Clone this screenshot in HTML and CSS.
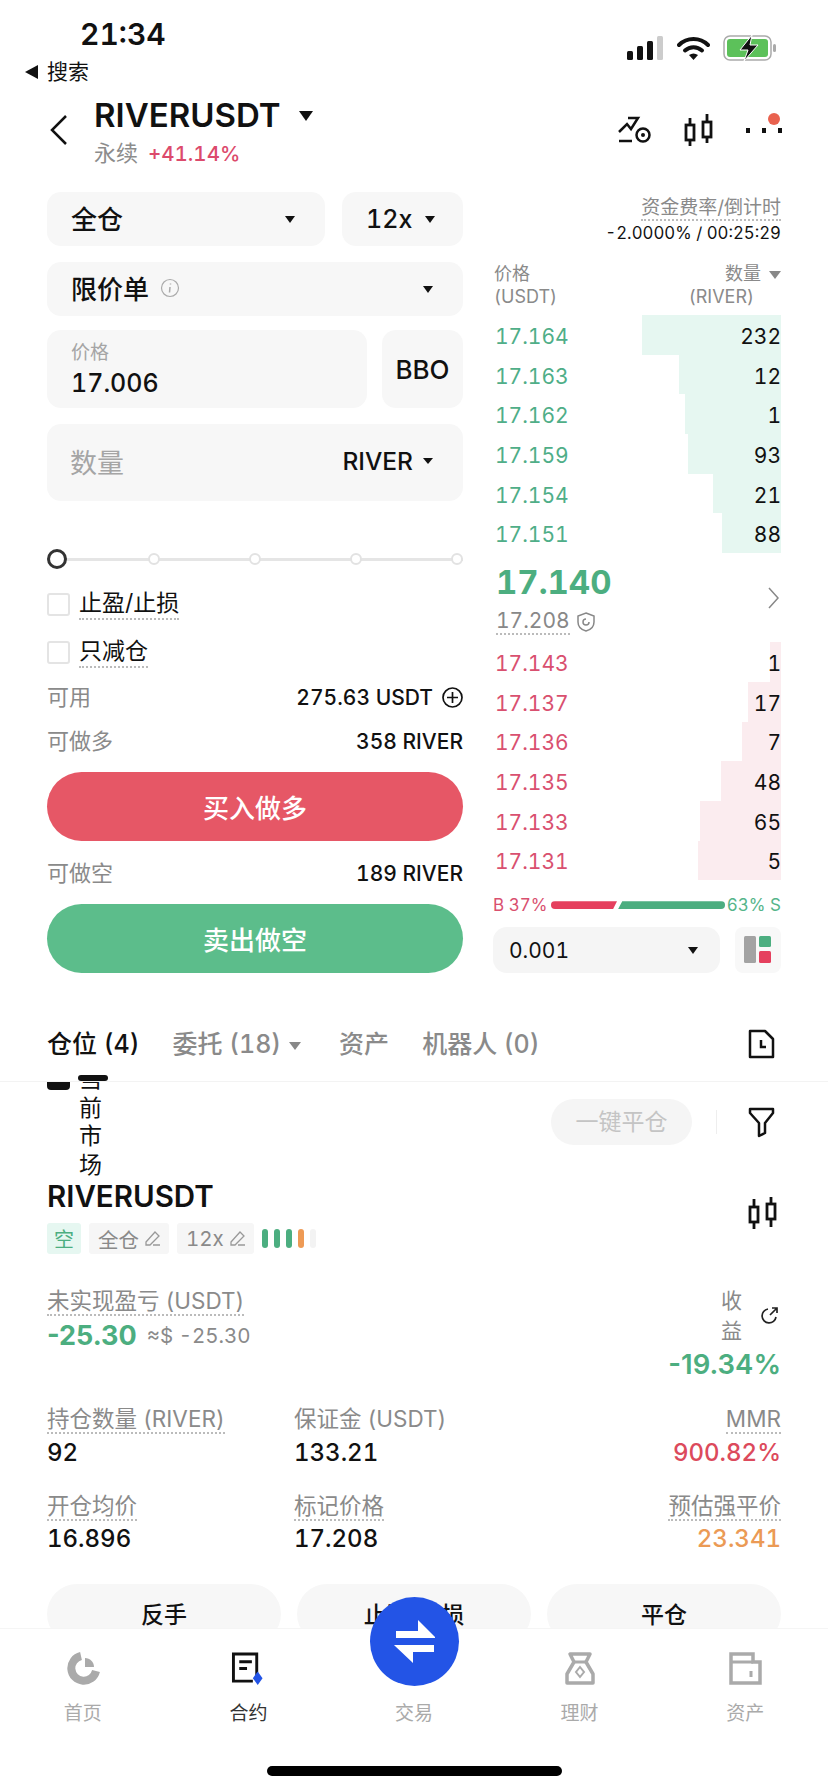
FILE: index.html
```html
<!DOCTYPE html>
<html lang="zh-CN">
<head>
    <meta charset="UTF-8">
    <meta name="viewport" content="width=device-width, initial-scale=1.0">
    <title>RIVERUSDT</title>
    <link rel="stylesheet" href="styles.css">
</head>
<body>
    <div class="app">
        <!-- Status bar -->
        <div class="status">
            <div class="status-left">
                <div class="time">21:34</div>
                <div class="back-app"><span class="back-tri"></span>搜索</div>
            </div>
            <div class="status-icons">
                <svg width="37" height="24" viewBox="0 0 37 24"><rect x="0" y="15" width="6" height="9" rx="1.5" fill="#111"/><rect x="10" y="10" width="6" height="14" rx="1.5" fill="#111"/><rect x="20" y="5" width="6" height="19" rx="1.5" fill="#111"/><rect x="30" y="0" width="6" height="24" rx="1.5" fill="#ccc"/></svg>
                <svg width="33" height="24" viewBox="0 0 33 24"><path d="M2 9C10 1 23 1 31 9" fill="none" stroke="#111" stroke-width="4" stroke-linecap="round"/><path d="M8 14.500C13 10 20 10 25 14.500" fill="none" stroke="#111" stroke-width="4" stroke-linecap="round"/><path d="M12 19L16.500 24L21 19C18 17 15 17 12 19Z" fill="#111"/></svg>
                <svg width="54" height="26" viewBox="0 0 54 26"><rect x="1" y="1" width="47" height="24" rx="6" fill="none" stroke="#aaa" stroke-width="1.500"/><rect x="4" y="4" width="41" height="18" rx="3" fill="#5cc15a"/><rect x="50" y="9" width="3" height="8" rx="1.500" fill="#aaa"/><path d="M29 0L17 15H25L21 26L35 10H27Z" fill="#111" stroke="#fff" stroke-width="1"/></svg>
            </div>
        </div>

        <!-- Header -->
        <div class="header">
            <svg class="chevron" width="18" height="30" viewBox="0 0 18 30"><path d="M16 1L2 15L16 29" fill="none" stroke="#111" stroke-width="2.500"/></svg>
            <div class="title-block">
                <div class="title">RIVERUSDT<span class="caret caret-title"></span></div>
                <div class="subtitle">永续<span class="change">+41.14%</span></div>
            </div>
            <div class="header-icons">
                <svg width="34" height="28" viewBox="0 0 34 28"><path d="M1 16L9 8L13 13L20 2H10" fill="none" stroke="#111" stroke-width="2.500"/><path d="M1 25H14" stroke="#111" stroke-width="2.500"/><circle cx="25" cy="19" r="6.500" fill="none" stroke="#111" stroke-width="2.500"/><circle cx="25" cy="19" r="2" fill="#111"/></svg>
                <svg width="30" height="33" viewBox="0 0 30 33"><path d="M6 4V32M23 0V29" stroke="#111" stroke-width="2.800"/><rect x="2" y="11" width="8" height="15" fill="#fff" stroke="#111" stroke-width="2.800"/><rect x="19" y="8" width="8" height="15" fill="#fff" stroke="#111" stroke-width="2.800"/></svg>
                <div class="more">
                    <span></span><span></span><span></span>
                    <i class="more-dot"></i>
                </div>
            </div>
        </div>

        <div class="trade">
            <!-- Order form -->
            <div class="form">
                <div class="form-row">
                    <div class="field field-margin">全仓<span class="caret"></span></div>
                    <div class="field field-lever">12x<span class="caret"></span></div>
                </div>
                <div class="field field-type">
                    <span class="type-name">限价单<svg class="info" width="20" height="20" viewBox="0 0 20 20"><circle cx="10" cy="10" r="8.500" fill="none" stroke="#aaa" stroke-width="1.200"/><path d="M10.500 5.500V6.500M10 9L9.500 14.500" stroke="#aaa" stroke-width="1.500"/></svg></span>
                    <span class="caret"></span>
                </div>
                <div class="form-row form-price">
                    <div class="field-price">
                        <div class="price-label">价格</div>
                        <div class="price-value">17.006</div>
                    </div>
                    <div class="bbo">BBO</div>
                </div>
                <div class="field-qty">
                    <span class="qty-label">数量</span>
                    <span class="qty-unit">RIVER<span class="caret"></span></span>
                </div>
                <div class="slider">
                    <span class="knob"></span>
                    <span class="stop"></span>
                    <span class="stop"></span>
                    <span class="stop"></span>
                    <span class="stop"></span>
                </div>
                <div class="check check-first"><span class="box"></span><span class="dotted">止盈/止损</span></div>
                <div class="check check-second"><span class="box"></span><span class="dotted">只减仓</span></div>
                <div class="info-row info-avail">
                    <span class="info-name">可用</span>
                    <span class="info-value">275.63 USDT<svg width="21" height="21" viewBox="0 0 21 21"><circle cx="10.500" cy="10.500" r="9.500" fill="none" stroke="#111" stroke-width="1.700"/><path d="M10.500 5V16M5 10.500H16" stroke="#111" stroke-width="1.700"/></svg></span>
                </div>
                <div class="info-row info-long">
                    <span class="info-name">可做多</span>
                    <span class="info-value">358 RIVER</span>
                </div>
                <div class="action action-buy">买入做多</div>
                <div class="info-row info-short">
                    <span class="info-name">可做空</span>
                    <span class="info-value">189 RIVER</span>
                </div>
                <div class="action action-sell">卖出做空</div>
            </div>

            <!-- Order book -->
            <div class="book">
                <div class="funding">
                    <div><span class="funding-label">资金费率/倒计时</span></div>
                    <div class="funding-value">-2.0000% / 00:25:29</div>
                </div>
                <div class="book-head">
                    <div>价格<br>(USDT)</div>
                    <div class="book-head-right">数量<span class="caret caret-gray"></span><br><span class="unit-river">(RIVER)</span></div>
                </div>
                <div class="rows rows-green">
                    <div class="row"><i class="depth" style="width:139px"></i><span class="px">17.164</span><span class="qty">232</span></div>
                    <div class="row"><i class="depth" style="width:102px"></i><span class="px">17.163</span><span class="qty">12</span></div>
                    <div class="row"><i class="depth" style="width:96px"></i><span class="px">17.162</span><span class="qty">1</span></div>
                    <div class="row"><i class="depth" style="width:93px"></i><span class="px">17.159</span><span class="qty">93</span></div>
                    <div class="row"><i class="depth" style="width:68px"></i><span class="px">17.154</span><span class="qty">21</span></div>
                    <div class="row"><i class="depth" style="width:59px"></i><span class="px">17.151</span><span class="qty">88</span></div>
                </div>
                <div class="mid">
                    <div>
                        <div class="last">17.140</div>
                        <div class="mark"><span class="dotted">17.208</span><svg width="18" height="20" viewBox="0 0 18 20"><path d="M9 1L17 4V10C17 15 13 18 9 19C5 18 1 15 1 10V4Z" fill="none" stroke="#888" stroke-width="1.500"/><path d="M12 10A3 3 0 1 1 9 7" fill="none" stroke="#888" stroke-width="1.500"/></svg></div>
                    </div>
                    <svg class="mid-arrow" width="11" height="22" viewBox="0 0 11 22"><path d="M1 1L10 11L1 21" fill="none" stroke="#888" stroke-width="1.500"/></svg>
                </div>
                <div class="rows rows-red">
                    <div class="row"><i class="depth" style="width:11px"></i><span class="px">17.143</span><span class="qty">1</span></div>
                    <div class="row"><i class="depth" style="width:33px"></i><span class="px">17.137</span><span class="qty">17</span></div>
                    <div class="row"><i class="depth" style="width:39px"></i><span class="px">17.136</span><span class="qty">7</span></div>
                    <div class="row"><i class="depth" style="width:60px"></i><span class="px">17.135</span><span class="qty">48</span></div>
                    <div class="row"><i class="depth" style="width:81px"></i><span class="px">17.133</span><span class="qty">65</span></div>
                    <div class="row"><i class="depth" style="width:83px"></i><span class="px">17.131</span><span class="qty">5</span></div>
                </div>
                <div class="ratio">
                    <span class="ratio-b">B 37%</span>
                    <span class="ratio-bar ratio-bar-b"></span>
                    <span class="ratio-bar ratio-bar-s"></span>
                    <span class="ratio-s">63% S</span>
                </div>
                <div class="book-tools">
                    <div class="tick">0.001<span class="caret"></span></div>
                    <div class="layout-btn">
                        <svg width="28" height="28" viewBox="0 0 28 28"><rect x="0" y="0" width="12" height="27" rx="1.500" fill="#a3a3a3"/><rect x="15" y="0" width="12" height="11" rx="1.500" fill="#4cae80"/><rect x="15" y="15" width="12" height="12" rx="1.500" fill="#e5405e"/></svg>
                    </div>
                </div>
            </div>
        </div>

        <!-- Tabs -->
        <div class="tabs">
            <span class="tab tab-active">仓位 (4)</span>
            <span class="tab">委托 (18)<span class="caret caret-gray"></span></span>
            <span class="tab tab-assets">资产</span>
            <span class="tab">机器人 (0)</span>
            <svg class="tab-history" width="27" height="30" viewBox="0 0 27 30"><path d="M2 2H17L25 10V28H2Z" fill="none" stroke="#111" stroke-width="2.500" stroke-linejoin="round"/><path d="M13 11V18H18" fill="none" stroke="#111" stroke-width="2.500"/></svg>
            <i class="glitch-bar"></i>
        </div>

        <!-- Position -->
        <div class="position">
            <div class="pos-top">
                <i class="glitch-check"></i>
                <div class="vertical-text">
                    <span>当</span><span>前</span><span>市</span><span>场</span>
                </div>
                <div class="pos-tools">
                    <div class="close-all">一键平仓</div>
                    <i class="tool-sep"></i>
                    <svg width="27" height="31" viewBox="0 0 27 31"><path d="M2 2H25V6L17 16V26L11 29V16L2 6Z" fill="none" stroke="#111" stroke-width="2.500" stroke-linejoin="round"/></svg>
                </div>
            </div>
            <div class="pos-name">
                <div>
                    <div class="pos-symbol">RIVERUSDT</div>
                    <div class="tags">
                        <span class="tag tag-side">空</span>
                        <span class="tag">全仓<svg width="17" height="17" viewBox="0 0 17 17"><path d="M2 12L11 2L15 6L6 15H2ZM9 15H16" fill="none" stroke="#999" stroke-width="1.300"/></svg></span>
                        <span class="tag">12x<svg width="17" height="17" viewBox="0 0 17 17"><path d="M2 12L11 2L15 6L6 15H2ZM9 15H16" fill="none" stroke="#999" stroke-width="1.300"/></svg></span>
                        <span class="risk">
                            <i class="risk-on"></i><i class="risk-on"></i><i class="risk-on"></i><i class="risk-warn"></i><i class="risk-off"></i>
                        </span>
                    </div>
                </div>
                <svg class="pos-candle" width="30" height="33" viewBox="0 0 30 33"><path d="M6 2V32M23 0V30" stroke="#111" stroke-width="2.800"/><rect x="2" y="10" width="8" height="15" fill="#fff" stroke="#111" stroke-width="2.800"/><rect x="19" y="7" width="8" height="15" fill="#fff" stroke="#111" stroke-width="2.800"/></svg>
            </div>
            <div class="pnl">
                <div>
                    <div class="label"><span class="dotted">未实现盈亏 (USDT)</span></div>
                    <div class="pnl-line"><span class="pnl-value">-25.30</span><span class="pnl-usd">≈$ -25.30</span></div>
                </div>
                <div class="roe">
                    <div class="roe-head">
                        <div class="roe-label"><span>收</span><span>益</span></div>
                        <svg width="20" height="20" viewBox="0 0 20 20"><path d="M9 3A7 7 0 1 0 17 11" fill="none" stroke="#222" stroke-width="1.700"/><path d="M11 9L18 2M13 2H18V7" fill="none" stroke="#222" stroke-width="1.700"/></svg>
                    </div>
                    <div class="roe-value">-19.34%</div>
                </div>
            </div>
            <div class="stats">
                <div class="label"><span class="dotted">持仓数量 (RIVER)</span></div>
                <div class="label">保证金 (USDT)</div>
                <div class="label label-right"><span class="dotted">MMR</span></div>
                <div class="stat">92</div>
                <div class="stat">133.21</div>
                <div class="stat stat-right stat-red">900.82%</div>
            </div>
            <div class="stats stats-second">
                <div class="label"><span class="dotted">开仓均价</span></div>
                <div class="label"><span class="dotted">标记价格</span></div>
                <div class="label label-right"><span class="dotted">预估强平价</span></div>
                <div class="stat">16.896</div>
                <div class="stat">17.208</div>
                <div class="stat stat-right stat-orange">23.341</div>
            </div>
            <div class="pos-actions">
                <div class="pos-btn">反手</div>
                <div class="pos-btn">止盈/止损</div>
                <div class="pos-btn">平仓</div>
            </div>
        </div>

        <!-- Bottom nav -->
        <div class="nav">
            <div class="nav-item">
                <svg width="34" height="33" viewBox="0 0 34 33"><path d="M15 4A12.500 12.500 0 1 0 30 19" fill="none" stroke="#aaa" stroke-width="8"/><path d="M19 6V15H28C28 10 24 6 19 6Z" fill="#aaa"/></svg>
                <span>首页</span>
            </div>
            <div class="nav-item nav-active">
                <svg width="34" height="34" viewBox="0 0 34 34"><path d="M26 24V2H2V30H22" fill="none" stroke="#111" stroke-width="3"/><path d="M8 10H21M8 17H16" stroke="#111" stroke-width="3"/><path d="M27 20L32 27L27 34L22 27Z" fill="#2354e6"/></svg>
                <span>合约</span>
            </div>
            <div class="nav-item">
                <i class="nav-spacer"></i>
                <span>交易</span>
            </div>
            <div class="nav-item">
                <svg width="32" height="33" viewBox="0 0 32 33"><path d="M6 2H26L22 10L29 22V31H3V22L10 10Z" fill="none" stroke="#aaa" stroke-width="3.500" stroke-linejoin="round"/><path d="M10 10H22" stroke="#aaa" stroke-width="3"/><path d="M16 15L20 20L16 25L12 20Z" fill="none" stroke="#aaa" stroke-width="2"/></svg>
                <span>理财</span>
            </div>
            <div class="nav-item">
                <svg width="33" height="33" viewBox="0 0 33 33"><path d="M2 31V2H24V10H31V31Z" fill="none" stroke="#aaa" stroke-width="3.500"/><path d="M2 10H24M22 19V25" stroke="#aaa" stroke-width="3"/></svg>
                <span>资产</span>
            </div>
        </div>
        <div class="swap">
            <svg width="44" height="46" viewBox="0 0 44 46"><path d="M3 12H25V1L42 18V19H3Z" fill="#fff"/><path d="M1 26H41V33H20V44L2 27Z" fill="#fff"/></svg>
        </div>
        <div class="home-bar"></div>
    </div>
</body>
</html>
```

FILE: styles.css
```css
* {
    box-sizing: border-box;
}

body {
    margin: 0;
    background-color: #fff;
    font-family: Inter, 'Noto Sans CJK SC', sans-serif;
    font-variant-numeric: tabular-nums;
    color: #111;
}

.app {
    position: relative;
    width: 828px;
    height: 1792px;
    overflow: hidden;
    background-color: #fff;
}

.caret {
    display: inline-block;
    width: 0;
    height: 0;
    border-left: 6px solid transparent;
    border-right: 6px solid transparent;
    border-top: 8px solid #111;
}

.caret-gray {
    border-top-color: #888;
    border-left-width: 6px;
    border-right-width: 6px;
    margin-left: 8px;
    vertical-align: middle;
}

.dotted {
    padding-bottom: 1px;
    border-bottom: 2px dotted #bbb;
}

/* Status bar */
.status {
    display: flex;
    justify-content: space-between;
    height: 86px;
    padding: 16px 51px 0 25px;
}

.time {
    margin-left: 55px;
    font-size: 30px;
    font-weight: 600;
    line-height: 36px;
}

.back-app {
    display: flex;
    align-items: center;
    margin-top: 6px;
    font-size: 21px;
    line-height: 28px;
}

.back-tri {
    width: 0;
    height: 0;
    margin-right: 9px;
    border-top: 7px solid transparent;
    border-bottom: 7px solid transparent;
    border-right: 13px solid #111;
}

.status-icons {
    display: flex;
    align-items: center;
    gap: 13px;
    height: 26px;
    margin-top: 19px;
}

/* Header */
.header {
    display: flex;
    height: 106px;
    padding: 11px 47px 0;
}

.chevron {
    margin: 18px 0 0 3px;
}

.title-block {
    margin-left: 26px;
}

.title {
    font-size: 33px;
    font-weight: 600;
    line-height: 36px;
}

.caret-title {
    margin-left: 18px;
    vertical-align: 6px;
    border-left-width: 7px;
    border-right-width: 7px;
    border-top-width: 10px;
}

.subtitle {
    margin-top: 5px;
    color: #8c8c8c;
    font-size: 22px;
    line-height: 30px;
}

.change {
    margin-left: 10px;
    color: #dc4a6c;
    font-size: 20.500px;
    font-weight: 500;
}

.header-icons {
    display: flex;
    align-items: center;
    gap: 32px;
    height: 40px;
    margin: 13px -1px 0 auto;
}

.more {
    position: relative;
    display: flex;
    gap: 12px;
    margin-left: 0;
}

.more span {
    width: 4px;
    height: 5px;
    background-color: #111;
}

.more-dot {
    position: absolute;
    top: -15px;
    right: 2px;
    width: 12px;
    height: 12px;
    border-radius: 50%;
    background-color: #e9624f;
}

/* Order form */
.trade {
    display: flex;
    gap: 30px;
    padding: 0 47px;
}

.form {
    width: 416px;
}

.form-row {
    display: flex;
    gap: 17px;
}

.field {
    display: flex;
    align-items: center;
    justify-content: space-between;
    height: 54px;
    border-radius: 14px;
    background-color: #f7f7f7;
    padding: 0 30px 3px 24px;
    font-size: 26px;
    font-weight: 500;
}

.field .caret {
    margin-top: 3px;
    border-left-width: 5px;
    border-right-width: 5px;
    border-top-width: 7px;
}

.field-margin {
    width: 278px;
}

.field-lever {
    width: 121px;
    padding: 0 28px 0 24px;
    font-size: 25px;
}

.field-lever .caret {
    margin-top: 0;
}

.field-type {
    margin-top: 16px;
}

.type-name {
    display: flex;
    align-items: center;
    gap: 11px;
}

.form-price {
    gap: 15px;
    margin-top: 14px;
}

.field-price {
    width: 320px;
    height: 78px;
    padding: 9px 24px 0;
    border-radius: 14px;
    background-color: #f7f7f7;
}

.price-label {
    color: #a5a5a5;
    font-size: 19px;
    line-height: 28px;
}

.price-value {
    font-size: 25px;
    font-weight: 500;
    line-height: 32px;
}

.bbo {
    display: flex;
    align-items: center;
    justify-content: center;
    width: 81px;
    height: 78px;
    border-radius: 14px;
    background-color: #f7f7f7;
    font-size: 26px;
    font-weight: 500;
}

.field-qty {
    display: flex;
    align-items: center;
    justify-content: space-between;
    height: 77px;
    margin-top: 16px;
    padding: 0 30px 3px 23px;
    border-radius: 14px;
    background-color: #f7f7f7;
}

.qty-label {
    color: #a5a5a5;
    font-size: 27px;
}

.qty-unit {
    display: flex;
    align-items: center;
    gap: 10px;
    font-size: 24.500px;
    font-weight: 500;
}

.qty-unit .caret {
    border-left-width: 5px;
    border-right-width: 5px;
    border-top-width: 6px;
}

.slider {
    display: flex;
    align-items: center;
    justify-content: space-between;
    height: 20px;
    margin-top: 48px;
    background: linear-gradient(#e5e5e5, #e5e5e5) center / 100% 3px no-repeat;
}

.knob {
    flex: none;
    width: 20px;
    height: 20px;
    margin-right: -8px;
    border: 3.500px solid #333;
    border-radius: 50%;
    background-color: #fff;
}

.stop {
    width: 12px;
    height: 12px;
    border: 2px solid #e2e2e2;
    border-radius: 50%;
    background-color: #fff;
}

.check {
    display: flex;
    align-items: center;
    height: 30px;
    font-size: 23px;
}

.check-first {
    margin-top: 20px;
}

.check-second {
    margin-top: 18px;
}

.box {
    width: 23px;
    height: 23px;
    margin-right: 9px;
    border: 2px solid #e4e4e4;
    border-radius: 3px;
}

.check .dotted {
    margin-top: 2px;
    line-height: 27px;
}

.info-row {
    display: flex;
    align-items: center;
    justify-content: space-between;
    height: 30px;
    color: #8a8a8a;
    font-size: 22px;
}

.info-name {
    margin-top: -4px;
}

.info-value {
    display: flex;
    align-items: center;
    gap: 9px;
    color: #111;
    font-size: 21px;
    font-weight: 500;
}

.info-avail {
    margin-top: 15px;
}

.info-long {
    margin-top: 14px;
}

.info-short {
    margin-top: 17px;
}

.action {
    display: flex;
    align-items: center;
    justify-content: center;
    height: 69px;
    margin-top: 16px;
    border-radius: 35px;
    color: #fff;
    font-size: 26px;
    font-weight: 500;
}

.action-buy {
    background-color: #e65766;
}

.action-sell {
    background-color: #5cbd8b;
}

/* Order book */
.book {
    width: 288px;
}

.funding {
    padding-top: 3px;
    text-align: right;
}

.funding-label {
    color: #8a8a8a;
    font-size: 19px;
    line-height: 26px;
    border-bottom: 2px dotted #bbb;
}

.funding-value {
    font-size: 16.800px;
    line-height: 24px;
}

.book-head {
    display: flex;
    justify-content: space-between;
    margin: 17px 0 0 1px;
    color: #8a8a8a;
    font-size: 18px;
    line-height: 23px;
}

.book-head-right {
    text-align: right;
}

.unit-river {
    margin-right: 27px;
}

.rows {
    display: flex;
    flex-direction: column;
}

.rows-green {
    margin-top: 7px;
    color: #4fae88;
}

.rows-red {
    margin-top: 1px;
    color: #d9506f;
}

.row {
    position: relative;
    display: flex;
    align-items: center;
    justify-content: space-between;
    height: 39.700px;
    padding: 3px 0 0 2px;
    font-size: 21px;
}

.qty {
    position: relative;
    color: #111;
}

.px {
    position: relative;
}

.depth {
    position: absolute;
    top: 0;
    right: 0;
    bottom: 0;
    background-color: #e6f7f1;
}

.rows-red .depth {
    background-color: #fbecef;
}

.mid {
    display: flex;
    justify-content: space-between;
    height: 79px;
    margin-top: 9px;
    padding: 0 2px 0 3px;
}

.mid-arrow {
    margin-top: 25px;
}

.last {
    color: #4cae80;
    font-size: 33px;
    font-weight: 700;
    line-height: 40px;
}

.mark {
    display: flex;
    align-items: center;
    gap: 7px;
    margin-top: 6px;
    color: #888;
    font-size: 21px;
    line-height: 24px;
}

.mark .dotted {
    padding-bottom: 0;
    line-height: 25px;
}

.ratio {
    display: flex;
    align-items: center;
    height: 20px;
    margin-top: 15px;
    color: #d9506f;
    font-size: 17px;
}

.ratio-b {
    width: 58px;
    white-space: nowrap;
}

.ratio-bar {
    height: 8px;
}

.ratio-bar-b {
    width: 66px;
    border-radius: 4px 0 0 4px;
    background-color: #e5405e;
    clip-path: polygon(0 0, 100% 0, 94% 100%, 0 100%);
}

.ratio-bar-s {
    width: 107px;
    margin-left: 1px;
    border-radius: 0 4px 4px 0;
    background-color: #4cae80;
    clip-path: polygon(4% 0, 100% 0, 100% 100%, 0 100%);
}

.ratio-s {
    margin-left: auto;
    color: #55b58a;
    white-space: nowrap;
}

.book-tools {
    display: flex;
    gap: 15px;
    height: 46px;
    margin-top: 12px;
}

.tick {
    display: flex;
    align-items: center;
    justify-content: space-between;
    width: 227px;
    padding: 0 22px 0 16px;
    border-radius: 14px;
    background-color: #f5f5f5;
    font-size: 21px;
}

.tick .caret {
    border-left-width: 5px;
    border-right-width: 5px;
    border-top-width: 7px;
}

.layout-btn {
    display: flex;
    align-items: center;
    justify-content: center;
    width: 46px;
    border-radius: 8px;
    background-color: #f8f8f8;
}

/* Tabs */
.tabs {
    position: relative;
    z-index: 1;
    display: flex;
    align-items: center;
    gap: 33px;
    height: 109px;
    padding: 33px 53px 0 47px;
    border-bottom: 1px solid #f3f3f3;
    background-color: #fff;
}

.tab {
    margin-top: -4px;
    color: #8a8a8a;
    font-size: 25px;
    font-weight: 500;
    white-space: nowrap;
}

.tab-active {
    color: #111;
}

.tab-assets {
    margin-left: 5px;
}

.tab-history {
    margin-left: auto;
}

.glitch-bar {
    position: absolute;
    left: 78px;
    bottom: 0;
    width: 30px;
    height: 6px;
    border-radius: 3px;
    background-color: #111;
}

/* Position */
.position {
    padding: 0 47px;
}

.pos-top {
    display: flex;
    align-items: flex-start;
}

.glitch-check {
    width: 23px;
    height: 8px;
    margin-right: 9px;
    border-radius: 0 0 4px 4px;
    background-color: #111;
}

.vertical-text {
    display: flex;
    flex-direction: column;
    margin-top: -17px;
    font-size: 23px;
    line-height: 28.500px;
}

.pos-tools {
    display: flex;
    align-items: center;
    margin: 17px 6px 0 auto;
}

.close-all {
    width: 141px;
    height: 46px;
    border-radius: 23px;
    background-color: #f5f5f5;
    color: #c4c4c4;
    font-size: 23px;
    line-height: 46px;
    text-align: center;
}

.tool-sep {
    width: 1px;
    height: 24px;
    margin: 0 31px 0 24px;
    background-color: #eee;
}

.pos-name {
    display: flex;
    justify-content: space-between;
}

.pos-symbol {
    font-size: 29.500px;
    font-weight: 600;
    line-height: 34px;
}

.pos-candle {
    margin: 18px 3px 0 0;
}

.tags {
    display: flex;
    align-items: center;
    gap: 8px;
    height: 31px;
    margin-top: 10px;
}

.tag {
    display: flex;
    align-items: center;
    gap: 5px;
    height: 31px;
    padding: 0 8px 0 9px;
    border-radius: 3px;
    background-color: #f6f6f6;
    color: #8a8a8a;
    font-size: 20.500px;
}

.tag-side {
    width: 34px;
    justify-content: center;
    padding: 0;
    background-color: #e6f7f1;
    color: #4cae80;
    font-size: 20px;
}

.risk {
    display: flex;
    gap: 6px;
}

.risk i {
    width: 6px;
    height: 19px;
    border-radius: 3px;
}

.risk-on {
    background-color: #4cae80;
}

.risk-warn {
    background-color: #ee9a55;
}

.risk-off {
    background-color: #f3f3f3;
}

.pnl {
    display: flex;
    justify-content: space-between;
    margin-top: 32px;
}

.label {
    color: #8a8a8a;
    font-size: 22.500px;
    line-height: 30px;
    white-space: nowrap;
}

.label .dotted {
    padding-bottom: 0;
}

.label-right {
    text-align: right;
}

.pnl-line {
    display: flex;
    align-items: center;
    gap: 10px;
    height: 34px;
    margin-top: 2px;
}

.pnl-value {
    color: #4cae80;
    font-size: 27px;
    font-weight: 700;
    font-variant-numeric: normal;
}

.pnl-usd {
    color: #8a8a8a;
    font-size: 20.500px;
}

.roe {
    display: flex;
    flex-direction: column;
    align-items: flex-end;
}

.roe-head {
    display: flex;
    align-items: center;
    gap: 17px;
    margin-right: 2px;
}

.roe-label {
    display: flex;
    flex-direction: column;
    color: #8a8a8a;
    font-size: 21px;
    line-height: 30px;
}

.roe-value {
    margin-top: 1px;
    color: #4cae80;
    font-size: 27.500px;
    font-weight: 600;
    font-variant-numeric: normal;
    line-height: 34px;
}

.stats {
    display: grid;
    grid-template-columns: 247px 1fr auto;
    margin-top: 23px;
}

.stat {
    margin-bottom: -4px;
    font-size: 24px;
    font-weight: 500;
    line-height: 38px;
}

.stats-second .stat {
    line-height: 36px;
}

.stat-right {
    text-align: right;
}

.stat-red {
    color: #dc4a5c;
}

.stat-orange {
    color: #eb9a55;
}

.pos-actions {
    display: flex;
    gap: 16px;
    margin-top: 31px;
}

.pos-btn {
    flex: 1;
    height: 60px;
    border-radius: 30px;
    background-color: #f7f7f7;
    font-size: 23px;
    font-weight: 500;
    line-height: 62px;
    text-align: center;
}

/* Bottom nav */
.nav {
    position: absolute;
    left: 0;
    right: 0;
    bottom: 0;
    z-index: 2;
    display: flex;
    height: 164px;
    padding-top: 23px;
    border-top: 1px solid #f5f5f5;
    background-color: #fff;
}

.nav-item {
    display: flex;
    flex: 1;
    flex-direction: column;
    align-items: center;
    color: #aaa;
    font-size: 19px;
    line-height: 26px;
}

.nav-item svg,
.nav-spacer {
    display: block;
    height: 33px;
    margin-bottom: 16px;
}

.nav-active {
    color: #333;
}

.swap {
    position: absolute;
    left: 370px;
    top: 1597px;
    z-index: 3;
    display: flex;
    align-items: center;
    justify-content: center;
    width: 89px;
    height: 89px;
    border-radius: 50%;
    background-color: #2354e6;
}

.home-bar {
    position: absolute;
    left: 267px;
    top: 1766px;
    z-index: 3;
    width: 295px;
    height: 10px;
    border-radius: 5px;
    background-color: #000;
}
```
